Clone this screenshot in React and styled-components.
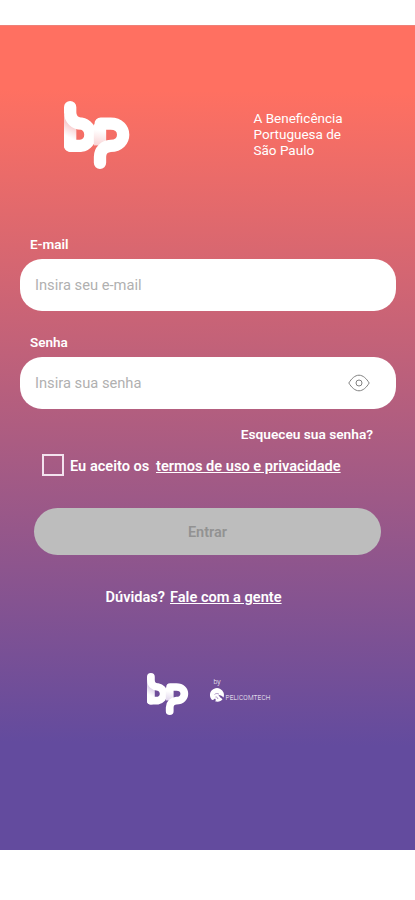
import React, { useState } from "react";
import styled, { createGlobalStyle } from "styled-components";

const GlobalStyle = createGlobalStyle`
  * {
    box-sizing: border-box;
  }

  body {
    margin: 0;
    background: #fff;
    font-family: Roboto, "Liberation Sans", sans-serif;
  }
`;

const Logo = ({ id, width, height, shade }) => (
  <LogoSvg
    width={width}
    height={height}
    viewBox="0 0 195 205"
    preserveAspectRatio="none"
    fill="none"
    stroke="#fff"
    strokeWidth="37"
    strokeLinecap="round"
    strokeLinejoin="round"
  >
    <defs>
      <linearGradient id={`${id}-b`} gradientUnits="userSpaceOnUse" x1="28" y1="76" x2="12" y2="108">
        <stop offset="0" stopColor={shade} />
        <stop offset="1" stopColor="#fff" />
      </linearGradient>
      <linearGradient id={`${id}-p`} gradientUnits="userSpaceOnUse" x1="116" y1="90" x2="108" y2="142">
        <stop offset="0" stopColor="#fff" />
        <stop offset="1" stopColor={shade} />
      </linearGradient>
    </defs>
    <path d="M18.500 50V135" stroke={`url(#${id}-b)`} />
    <path d="M18.500 18.500V34C18.500 55 34 68 51 68A34 34 0 0 1 51 135H18.500" />
    <path d="M108 70V134" stroke={`url(#${id}-p)`} strokeLinecap="butt" />
    <path d="M110 68H140C190 68 190 135 140 135C121 136 108 150 108 168V186.500" />
  </LogoSvg>
);

const EyeIcon = () => (
  <svg width="22" height="18" viewBox="0 0 22 18" fill="none" stroke="#808080" strokeWidth="1">
    <path d="M0.8 9C3.500 4.600 7 1.200 11 1.200S18.500 4.600 21.200 9C18.500 13.400 15 16.800 11 16.800S3.500 13.400 0.800 9Z" />
    <circle cx="11" cy="9" r="3" />
  </svg>
);

const PelicanIcon = () => (
  <svg width="14" height="14" viewBox="0 0 14 14">
    <path d="M2 12A7 7 0 1 1 13.500 9.500C12 8 11 7 8.500 7C9.500 9 11 10 12.500 11.300C11 13.500 8 14.300 5 13.300C6 12.500 6 11.500 5 10.500C4 11.500 3 12 2 12Z" fill="#fff" />
    <path d="M4.500 6.500C6 5.200 7.500 5.200 9 6.200M5.500 9C6.500 8.500 7 9 8 11" fill="none" stroke="#9a7db8" strokeWidth="0.8" />
  </svg>
);

export default function App() {
  const [email, setEmail] = useState("");
  const [password, setPassword] = useState("");
  const [visible, setVisible] = useState(false);
  const [accepted, setAccepted] = useState(false);

  return (
    <Page>
      <GlobalStyle />
      <Screen>
        <Header>
          <Logo id="top" width={65} height={68} shade="#f8cdcf" />
          <Slogan>
            A Beneficência
            <br />
            Portuguesa de
            <br />
            São Paulo
          </Slogan>
        </Header>
        <Field>
          <Label htmlFor="email">E-mail</Label>
          <InputBox>
            <Input
              id="email"
              placeholder="Insira seu e-mail"
              value={email}
              onChange={(e) => setEmail(e.target.value)}
            />
          </InputBox>
        </Field>
        <Field>
          <Label htmlFor="password">Senha</Label>
          <InputBox>
            <Input
              id="password"
              type={visible ? "text" : "password"}
              placeholder="Insira sua senha"
              value={password}
              onChange={(e) => setPassword(e.target.value)}
            />
            <EyeButton aria-label="Mostrar senha" onClick={() => setVisible(!visible)}>
              <EyeIcon />
            </EyeButton>
          </InputBox>
        </Field>
        <Forgot>Esqueceu sua senha?</Forgot>
        <Terms>
          <Checkbox
            type="checkbox"
            aria-label="Eu aceito os termos"
            checked={accepted}
            onChange={() => setAccepted(!accepted)}
          />
          <TermsText>Eu aceito os</TermsText>
          <TermsLink>termos de uso e privacidade</TermsLink>
        </Terms>
        <SubmitButton disabled={!accepted}>Entrar</SubmitButton>
        <Help>
          <span>Dúvidas?</span>
          <HelpLink>Fale com a gente</HelpLink>
        </Help>
        <Footer>
          <Logo id="bottom" width={41} height={42} shade="#ddd1ea" />
          <Partner>
            <By>by</By>
            <PartnerRow>
              <PelicanIcon />
              <PartnerName>PELICOMTECH</PartnerName>
            </PartnerRow>
          </Partner>
        </Footer>
      </Screen>
    </Page>
  );
}

const Page = styled.div`
  width: 415px;
  height: 900px;
  padding: 25px 0 50px;
  background: #fff;
  overflow: hidden;
`;

const Screen = styled.main`
  display: flex;
  flex-direction: column;
  height: 825px;
  border-top: 1px solid #ee8078;
  background: linear-gradient(180.5deg, #ff7061 8%, #634b9e 87%);
  color: #fff;
`;

const Header = styled.header`
  display: flex;
  justify-content: space-between;
  height: 210px;
  padding: 75px 71.5px 0 64px;
`;

const LogoSvg = styled.svg`
  flex: none;
  overflow: visible;
`;

const Slogan = styled.div`
  width: 90px;
  padding-top: 9px;
  font-size: 13.5px;
  line-height: 16px;
  white-space: nowrap;
`;

const Field = styled.div`
  height: 97.5px;
  padding: 0 19px 0 20px;
`;

const Label = styled.label`
  display: block;
  height: 23px;
  padding-left: 10px;
  font-size: 13.5px;
  font-weight: 600;
  line-height: 16px;
`;

const InputBox = styled.div`
  display: flex;
  align-items: center;
  height: 52px;
  padding: 0 26px 0 15px;
  border-radius: 22px;
  background: #fff;
`;

const Input = styled.input`
  flex: 1;
  min-width: 0;
  padding: 0;
  border: none;
  outline: none;
  background: none;
  color: #444;
  font-family: inherit;
  font-size: 14.7px;

  &::placeholder {
    color: #b0b0b0;
  }
`;

const EyeButton = styled.button`
  display: flex;
  padding: 0;
  border: none;
  background: none;
  cursor: pointer;
`;

const Forgot = styled.a`
  align-self: flex-end;
  height: 28px;
  margin-top: -5px;
  padding-right: 42px;
  font-size: 13.7px;
  font-weight: 600;
  line-height: 17px;
  cursor: pointer;
`;

const Terms = styled.div`
  display: flex;
  align-items: center;
  height: 22px;
  padding-left: 42px;
  font-size: 14.6px;
  font-weight: 600;
  line-height: 20px;
  white-space: nowrap;
`;

const Checkbox = styled.input`
  appearance: none;
  width: 22px;
  height: 22px;
  margin: 0 6px 0 0;
  border: 2px solid #f3e2ee;

  &:checked {
    background: #fff;
  }
`;

const TermsText = styled.span`
  width: 86px;
  padding-top: 1px;
`;

const TermsLink = styled.a`
  padding-top: 1px;
  text-decoration: underline;
  cursor: pointer;
`;

const SubmitButton = styled.button`
  height: 47px;
  margin: 32px 34px 0;
  padding: 2px 0 0;
  border: none;
  border-radius: 24px;
  background: #bdbdbd;
  color: #929292;
  font-family: inherit;
  font-size: 14.5px;
  font-weight: 600;
`;

const Help = styled.div`
  display: flex;
  gap: 5px;
  height: 118px;
  padding: 33px 0 0 105.5px;
  font-size: 14.6px;
  font-weight: 600;
  line-height: 18px;
`;

const HelpLink = styled.a`
  text-decoration: underline;
  cursor: pointer;
`;

const Footer = styled.footer`
  display: flex;
  gap: 22px;
  padding-left: 146.5px;
`;

const Partner = styled.div`
  padding-top: 5px;
`;

const By = styled.div`
  height: 10px;
  padding-left: 4px;
  font-size: 7px;
  font-weight: 300;
  line-height: 8px;
`;

const PartnerRow = styled.div`
  display: flex;
  align-items: flex-end;
  gap: 2px;
`;

const PartnerName = styled.span`
  font-size: 6.5px;
  font-weight: 300;
  letter-spacing: 0.15px;
  line-height: 8px;
`;
